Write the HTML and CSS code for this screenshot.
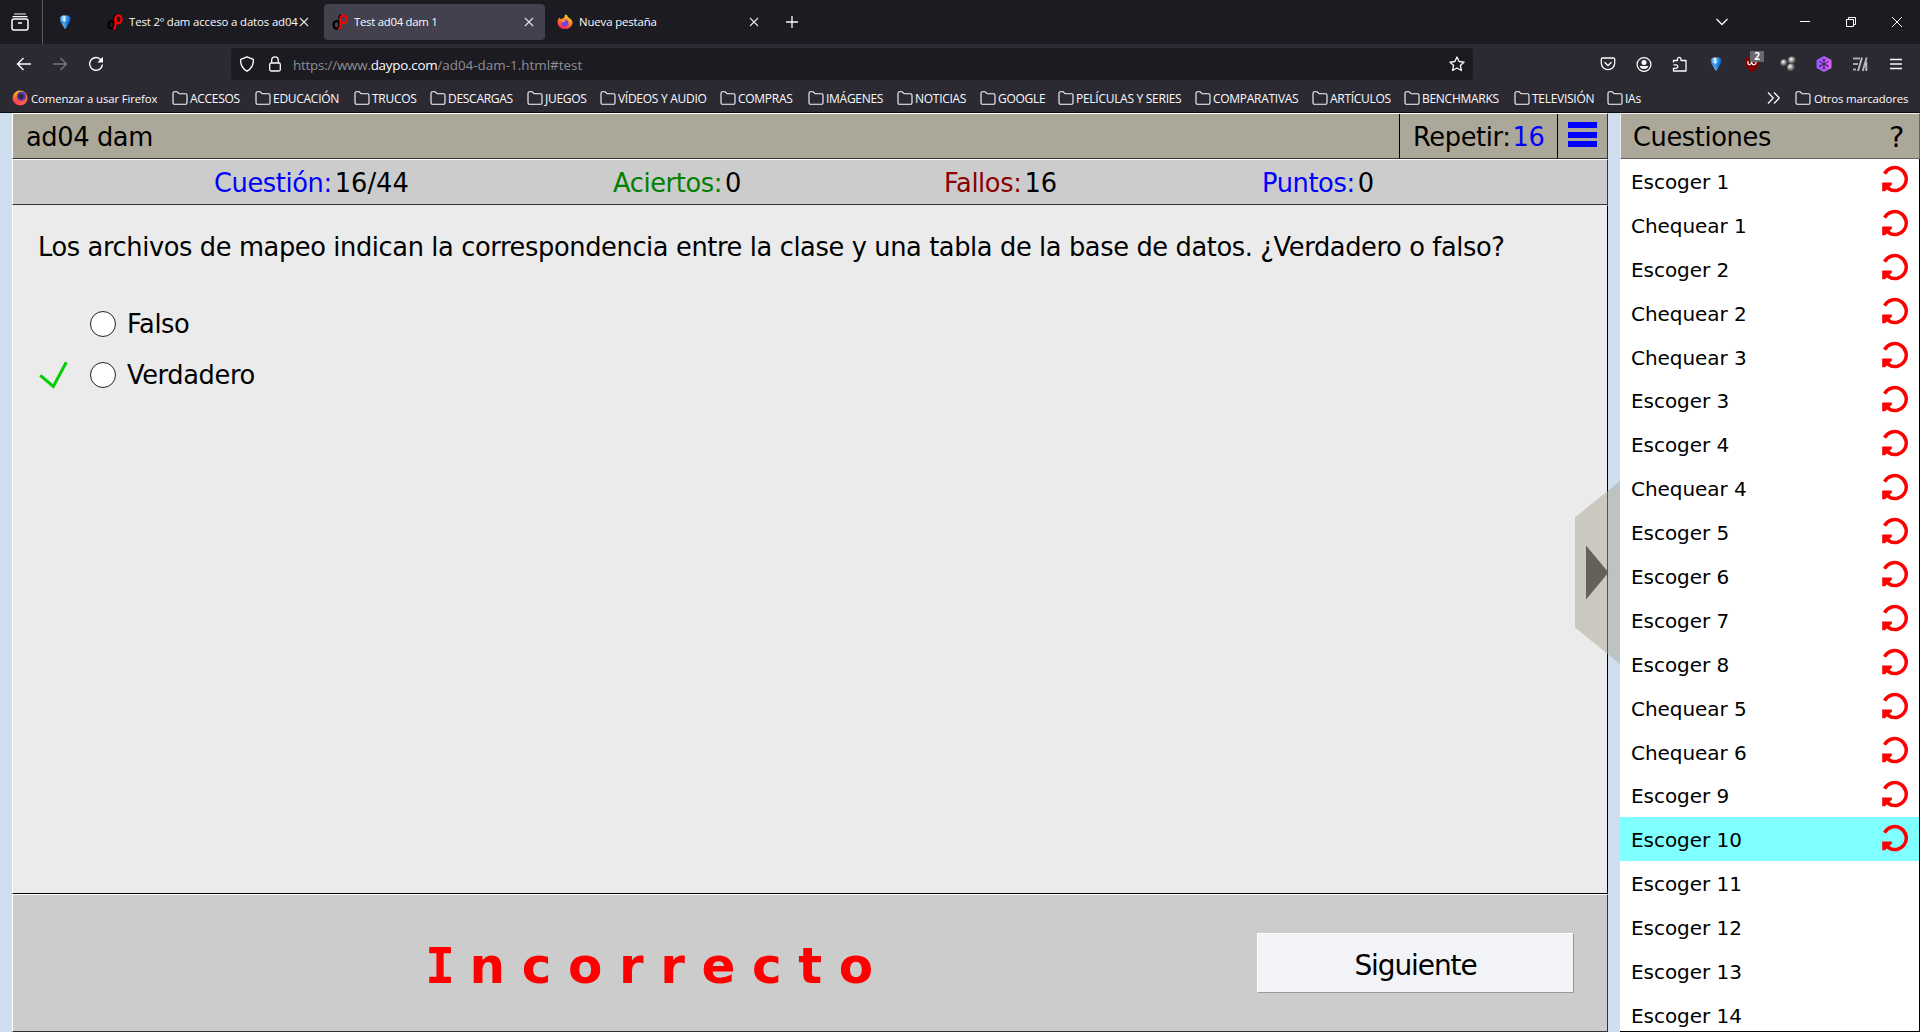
FILE: index.html
```html
<!DOCTYPE html>
<html lang="es">
<head>
<meta charset="utf-8">
<title>Test ad04 dam 1</title>
<link rel="stylesheet" href="styles.css">
</head>
<body>
<svg class="defs" width="0" height="0">
  <defs>
    <linearGradient id="fx" x1="0.7" y1="0" x2="0.3" y2="1"><stop offset="0" stop-color="#ffe226"/><stop offset="0.45" stop-color="#ff8a1f"/><stop offset="1" stop-color="#f5156c"/></linearGradient>
    <linearGradient id="gem" x1="0" y1="0" x2="1" y2="0"><stop offset="0" stop-color="#1176e0"/><stop offset="0.42" stop-color="#e8faff"/><stop offset="0.6" stop-color="#35a5f5"/><stop offset="1" stop-color="#0a4fb4"/></linearGradient>
    <linearGradient id="hex" x1="0" y1="0" x2="1" y2="0"><stop offset="0" stop-color="#9059ff"/><stop offset="1" stop-color="#e05cf5"/></linearGradient>
    <radialGradient id="ball" cx="0.4" cy="0.35" r="0.65"><stop offset="0" stop-color="#fff"/><stop offset="0.5" stop-color="#8a8a8a"/><stop offset="1" stop-color="#2c2c2c"/></radialGradient>
    <symbol id="folder" viewBox="0 0 16 16"><path d="M1 3.2A1.4 1.4 0 0 1 2.400 1.800H5.200L7.200 3.800H13.600A1.400 1.400 0 0 1 15 5.200V12.800A1.400 1.400 0 0 1 13.600 14.200H2.400A1.400 1.400 0 0 1 1 12.800Z" fill="none" stroke="#fbfbfe" stroke-width="1.1"/></symbol>
    <symbol id="close" viewBox="0 0 16 16"><path d="M4 4L12 12M12 4L4 12" stroke="#e6e6ea" stroke-width="1.1"/></symbol>
    <symbol id="daypo" viewBox="0 0 16 16"><ellipse cx="4.500" cy="10.800" rx="3" ry="3.800" fill="none" stroke="#000" stroke-width="2.200"/><path d="M8 15.800Q7.200 15 7.200 12V5Q7.200 2 8.800 .8" fill="none" stroke="#000" stroke-width="2"/><ellipse cx="11.400" cy="5.200" rx="3.100" ry="3.900" fill="none" stroke="#f00" stroke-width="2.200"/><path d="M8.500 4V11Q8.500 14 6.500 15.500" fill="none" stroke="#f00" stroke-width="2.200"/></symbol>
    <symbol id="firefox" viewBox="0 0 16 16"><path d="M8.600 .3Q10.500 1.500 11 3.300Q15.800 5.600 15.500 9.300A7.600 7 0 0 1 .5 9.200Q.3 5.500 2.500 3.500L3.200 5L5.500 4.500Q7 4.400 7.500 3Q7.600 1.500 8.600 .3Z" fill="url(#fx)"/><circle cx="8" cy="9" r="3.400" fill="#7540e8"/><path d="M4.500 6.500Q7 5 9 7Q6.500 7 6.800 8.600Q5 8.400 4.500 6.500Z" fill="#ff9a20"/></symbol>
    <symbol id="gemstone" viewBox="-1 -0.5 18 17.500"><path d="M2 3L5 1H12L14.500 3.500L13.500 7L8.800 15.500H7.600L2.800 7.500Z" fill="url(#gem)"/><path d="M3 6.500L7.500 8L13.500 6L8.500 15.500H7.800Z" fill="#0873d6" opacity=".65"/></symbol>
    <symbol id="redo" viewBox="0 0 28 28"><path d="M3.600 8.700A11.500 11.500 0 1 1 7 23.400" fill="none" stroke="#f00" stroke-width="3.500"/><path d="M1.200 17.600H10.800V20L8.500 21.500L11 24L9.500 26L6.500 24L4 26.300H1.200Z" fill="#f00"/></symbol>
  </defs>
</svg>

<header class="browser">
  <div class="tabstrip">
    <span class="recent"><svg viewBox="0 0 18 18" width="18" height="18"><path d="M3.500 1H14.500M2 3.700H16" stroke="#fbfbfe" stroke-width="1.200" stroke-linecap="round"/><rect x="1" y="6" width="16" height="11" rx="2" fill="none" stroke="#fbfbfe" stroke-width="1.500"/><path d="M7 10H11" stroke="#fbfbfe" stroke-width="1.500"/></svg></span>
    <span class="pinned"><svg width="16" height="16"><use href="#gemstone"/></svg></span>
    <div class="tab crowded"><svg width="16" height="20"><use href="#daypo"/></svg><span>Test 2º dam acceso a datos ad04</span><svg class="x" width="16" height="16"><use href="#close"/></svg></div>
    <div class="tab active"><svg width="16" height="20"><use href="#daypo"/></svg><span class="tight">Test ad04 dam 1</span><svg class="x" width="16" height="16"><use href="#close"/></svg></div>
    <div class="tab"><svg width="16" height="16"><use href="#firefox"/></svg><span>Nueva pestaña</span><svg class="x" width="16" height="16"><use href="#close"/></svg></div>
    <svg class="plus" width="16" height="16"><path d="M8 2V14M2 8H14" stroke="#fbfbfe" stroke-width="1.300"/></svg>
    <div class="window">
      <svg width="16" height="16" viewBox="0 0 16 16"><path d="M2.500 5L8 10.500L13.500 5" fill="none" stroke="#fbfbfe" stroke-width="1.300"/></svg>
      <svg width="12" height="12"><path d="M1 5.500H11" stroke="#fff"/></svg>
      <svg width="12" height="12"><path d="M1.500 3.500H8.500V10.500H1.500ZM3.500 3.500V1.500H10.500V8.500H8.500" fill="none" stroke="#fff"/></svg>
      <svg width="12" height="12"><path d="M1 1L11 11M11 1L1 11" stroke="#fff"/></svg>
    </div>
  </div>

  <div class="navbar">
    <div class="moves">
      <svg width="16" height="16"><path d="M1.500 8H15M7.500 2L1.500 8L7.500 14" fill="none" stroke="#fbfbfe" stroke-width="1.400"/></svg>
      <svg width="16" height="16"><path d="M1 8H14.500M8.500 2L14.500 8L8.500 14" fill="none" stroke="#76757c" stroke-width="1.300"/></svg>
      <svg width="16" height="16"><path d="M13 3.800A6.400 6.400 0 1 0 14.400 8.500" fill="none" stroke="#fbfbfe" stroke-width="1.400"/><path d="M15 .8V6.500H9.300Z" fill="#fbfbfe"/></svg>
    </div>
    <div class="urlbar">
      <svg width="16" height="16"><path d="M8 .8L14.300 3.300Q15 11 8 15.200Q1 11 1.700 3.300Z" fill="none" stroke="#fbfbfe" stroke-width="1.400" stroke-linejoin="round"/></svg>
      <svg width="16" height="16"><rect x="2.700" y="7" width="10.600" height="8" rx="1.500" fill="none" stroke="#fbfbfe" stroke-width="1.300"/><path d="M4.700 7V4.200A3.300 3.300 0 0 1 11.300 4.200V7" fill="none" stroke="#fbfbfe" stroke-width="1.300"/></svg>
      <p class="url"><span class="scheme">https://www.</span><span class="host">daypo.com</span><span class="path">/ad04-dam-1.html#test</span></p>
      <svg width="16" height="16"><path d="M8 1L10.100 5.500L15.100 6.100L11.400 9.500L12.400 14.500L8 12L3.600 14.500L4.600 9.500L.9 6.100L5.900 5.500Z" fill="none" stroke="#fbfbfe" stroke-width="1.300" stroke-linejoin="round"/></svg>
    </div>
    <div class="tools">
      <svg width="16" height="16"><path d="M2.500 2H13.500A1.200 1.200 0 0 1 14.700 3.200V7A6.700 6.700 0 0 1 1.300 7V3.200A1.200 1.200 0 0 1 2.500 2Z" fill="none" stroke="#fbfbfe" stroke-width="1.300"/><path d="M4.500 6.200L8 9.500L11.500 6.200" fill="none" stroke="#fbfbfe" stroke-width="1.300"/></svg>
      <svg width="16" height="16"><circle cx="8" cy="8.500" r="6.900" fill="none" stroke="#fbfbfe" stroke-width="1.300"/><circle cx="8" cy="6.500" r="2.500" fill="#fbfbfe"/><path d="M3.600 10H12.400Q11.500 13 8 13Q4.500 13 3.600 10Z" fill="#fbfbfe"/></svg>
      <svg width="16" height="16"><path d="M1.500 6.500V4.500H5.500V2.800A1.800 1.800 0 0 1 9 2.800V4.500H14V15H1.500V12.300H4A1.700 1.700 0 0 0 4 8.800H1.500" fill="none" stroke="#fbfbfe" stroke-width="1.300" stroke-linejoin="round"/></svg>
      <svg width="16" height="16"><use href="#gemstone"/></svg>
      <span class="ublock"><svg width="16" height="16"><path d="M8 0Q11 2 14.500 2V8Q14.500 13 8 16Q1.500 13 1.500 8V2Q5 2 8 0Z" fill="#800000"/><path d="M4 5V7.500Q4.500 9 6 8.500Q7.500 8 7.700 5.500Q8 9 10 8.700Q12 8.500 12 6.800Q11.500 5 10 5.500" fill="none" stroke="#fff" stroke-width="1.200"/></svg><b>2</b></span>
      <svg width="16" height="16"><circle cx="4" cy="7" r="3.700" fill="url(#ball)"/><circle cx="12" cy="4.500" r="4" fill="url(#ball)"/><circle cx="11" cy="11.700" r="4" fill="url(#ball)"/></svg>
      <svg width="16" height="16"><path d="M8 0L15.500 4V12L8 16L.5 12V4Z" fill="url(#hex)"/><path d="M8 2.500V13.500M3.500 5.500L12.500 10.500M12.500 5.500L3.500 10.500M4.800 8.800L4 11M11.300 8.800L12 11M6.500 3.500L8 5L9.500 3.500M6.500 12.500L8 11L9.500 12.500" fill="none" stroke="#31204f" stroke-width="1"/></svg>
      <svg width="16" height="16"><path d="M1 2.500H8M1 8H6M1 13.500H4" stroke="#a9a9ad" stroke-width="2.200"/><path d="M10 1.500L6 15M14.700 1.500L10.700 15M14.300 6V15" stroke="#b9b9bd" stroke-width="1.900"/></svg>
      <svg width="16" height="16"><path d="M2 3.500H14M2 8H14M2 12.500H14" stroke="#fbfbfe" stroke-width="1.300"/></svg>
    </div>
  </div>

  <div class="bookmarks">
    <a class="mixed"><svg width="16" height="16" viewBox="0 0 16 16"><circle cx="8" cy="8" r="7.500" fill="url(#fx)"/><circle cx="9.500" cy="6.200" r="4.800" fill="#6a35b8"/><circle cx="9" cy="6.500" r="2.700" fill="#2b2a45"/><path d="M2 9Q4.500 14 10 12Q14 10.500 14.500 6Q16 12 11.500 14.500Q5 17 2 9Z" fill="#ff5a50"/></svg><span>Comenzar a usar Firefox</span></a>
    <a><svg width="16" height="16"><use href="#folder"/></svg><span>ACCESOS</span></a>
    <a><svg width="16" height="16"><use href="#folder"/></svg><span>EDUCACIÓN</span></a>
    <a><svg width="16" height="16"><use href="#folder"/></svg><span>TRUCOS</span></a>
    <a><svg width="16" height="16"><use href="#folder"/></svg><span>DESCARGAS</span></a>
    <a><svg width="16" height="16"><use href="#folder"/></svg><span>JUEGOS</span></a>
    <a><svg width="16" height="16"><use href="#folder"/></svg><span>VÍDEOS Y AUDIO</span></a>
    <a><svg width="16" height="16"><use href="#folder"/></svg><span>COMPRAS</span></a>
    <a><svg width="16" height="16"><use href="#folder"/></svg><span>IMÁGENES</span></a>
    <a><svg width="16" height="16"><use href="#folder"/></svg><span>NOTICIAS</span></a>
    <a><svg width="16" height="16"><use href="#folder"/></svg><span>GOOGLE</span></a>
    <a><svg width="16" height="16"><use href="#folder"/></svg><span>PELÍCULAS Y SERIES</span></a>
    <a><svg width="16" height="16"><use href="#folder"/></svg><span>COMPARATIVAS</span></a>
    <a><svg width="16" height="16"><use href="#folder"/></svg><span>ARTÍCULOS</span></a>
    <a><svg width="16" height="16"><use href="#folder"/></svg><span>BENCHMARKS</span></a>
    <a><svg width="16" height="16"><use href="#folder"/></svg><span>TELEVISIÓN</span></a>
    <a><svg width="16" height="16"><use href="#folder"/></svg><span>IAs</span></a>
    <svg width="16" height="16"><path d="M2 2.500L7.300 8L2 13.500M8 2.500L13.300 8L8 13.500" fill="none" stroke="#fbfbfe" stroke-width="1.200"/></svg>
    <a class="mixed"><svg width="16" height="16"><use href="#folder"/></svg><span>Otros marcadores</span></a>
  </div>
</header>

<div class="page">
  <main class="quiz">
    <div class="panel titlebar">
      <h1>ad04 dam</h1>
      <div class="repeat">Repetir:<span>16</span></div>
      <div class="menu"><i></i><i></i><i></i></div>
    </div>
    <div class="panel stats">
      <div class="blue">Cuestión:<b>16/44</b></div>
      <div class="green">Aciertos:<b>0</b></div>
      <div class="red">Fallos:<b>16</b></div>
      <div class="blue">Puntos:<b>0</b></div>
    </div>
    <div class="panel question">
      <p>Los archivos de mapeo indican la correspondencia entre la clase y una tabla de la base de datos. ¿Verdadero o falso?</p>
      <div class="option"><span class="mark"></span><i class="radio"></i>Falso</div>
      <div class="option"><span class="mark"><svg width="30" height="30"><path d="M2.300 15.300L15.300 26.500L28.300 2.200" fill="none" stroke="#00d000" stroke-width="3"/></svg></span><i class="radio"></i>Verdadero</div>
    </div>
    <div class="panel result">
      <div class="verdict"><span class="slab">I</span>ncorrecto</div>
      <button class="next">Siguiente</button>
    </div>
  </main>

  <aside class="side">
    <div class="sidehead"><span>Cuestiones</span><span class="help">?</span></div>
    <ul>
      <li>Escoger 1<svg><use href="#redo"/></svg></li>
      <li>Chequear 1<svg><use href="#redo"/></svg></li>
      <li>Escoger 2<svg><use href="#redo"/></svg></li>
      <li>Chequear 2<svg><use href="#redo"/></svg></li>
      <li>Chequear 3<svg><use href="#redo"/></svg></li>
      <li>Escoger 3<svg><use href="#redo"/></svg></li>
      <li>Escoger 4<svg><use href="#redo"/></svg></li>
      <li>Chequear 4<svg><use href="#redo"/></svg></li>
      <li>Escoger 5<svg><use href="#redo"/></svg></li>
      <li>Escoger 6<svg><use href="#redo"/></svg></li>
      <li>Escoger 7<svg><use href="#redo"/></svg></li>
      <li>Escoger 8<svg><use href="#redo"/></svg></li>
      <li>Chequear 5<svg><use href="#redo"/></svg></li>
      <li>Chequear 6<svg><use href="#redo"/></svg></li>
      <li>Escoger 9<svg><use href="#redo"/></svg></li>
      <li class="current">Escoger 10<svg><use href="#redo"/></svg></li>
      <li>Escoger 11</li>
      <li>Escoger 12</li>
      <li>Escoger 13</li>
      <li>Escoger 14</li>
    </ul>
    <svg class="handle" width="45" height="183"><path d="M45 0V183L0 146.500V36.500Z" fill="#aba695" opacity=".5"/><path d="M11 64.500L33.500 91.500L11 118.500Z" fill="#62615c"/></svg>
  </aside>
</div>
</body>
</html>
```
FILE: styles.css
```css
* { box-sizing: border-box; }
body {
  margin: 0;
  height: 1032px;
  overflow: hidden;
  display: flex;
  flex-direction: column;
  background: #cfdeee;
  color: #000;
  font: 25.7px/30px Verdana, "DejaVu Sans", sans-serif;
  letter-spacing: -0.39px;
}
svg { display: block; flex: none; }
.defs { position: absolute; }

/* Browser chrome */
.browser {
  flex: none;
  height: 113px;
  background: #2b2a33;
  border-bottom: 1px solid #0c0c0f;
  color: #fbfbfe;
  font: 12px/16px "Open Sans", sans-serif;
}
.tabstrip {
  height: 44px;
  display: flex;
  align-items: center;
  background: #1c1b22;
}
.recent {
  width: 43px;
  height: 44px;
  padding: 13px 0 0 11px;
  border-right: 1px solid #5b5a62;
}
.pinned { width: 56px; padding-left: 14px; }
.tab {
  width: 221px;
  height: 36px;
  margin-right: 4px;
  padding: 0 8px;
  display: flex;
  align-items: center;
  gap: 6px;
  border-radius: 4px;
  font-size: 11.4px;
  letter-spacing: -0.13px;
  white-space: nowrap;
}
.tab .tight { letter-spacing: -0.28px; }
.tab.active { background: #42414d; }
.tab .x { margin-left: auto; }
.tab.crowded .x { margin-left: -8px; }
.plus { margin-left: 10px; }
.window {
  margin-left: auto;
  padding-right: 17px;
  display: flex;
  align-items: center;
  gap: 34px;
}
.window svg:first-child { margin-right: 35px; }

.navbar {
  height: 40px;
  padding: 4px 16px;
  display: flex;
  align-items: center;
}
.moves { width: 215px; display: flex; gap: 20px; }
.urlbar {
  width: 1242px;
  height: 32px;
  padding: 0 8px;
  display: flex;
  align-items: center;
  gap: 12px;
  border-radius: 4px;
  background: #1c1b22;
}
.url { flex: 1; margin: 1px 0 0 -2px; font-size: 13.4px; color: #8f8f95; }
.scheme { letter-spacing: -0.22px; }
.host { color: #fbfbfe; letter-spacing: -0.26px; }
.path { letter-spacing: 0.02px; }
.tools { margin-left: auto; display: flex; gap: 20px; }
.ublock { position: relative; }
.ublock b {
  position: absolute;
  left: 6px;
  top: -13px;
  width: 14px;
  height: 11px;
  background: #68676c;
  font-size: 10px;
  line-height: 11px;
  text-align: center;
}
.tools .ublock b { top: -5px; }

.bookmarks {
  height: 28px;
  padding-left: 12px;
  display: grid;
  grid-template-columns: 160px 83px 99px 76px 97px 73px 120px 88px 89px 83px 78px 137px 117px 92px 110px 93px 159px 29px auto;
  align-items: center;
  letter-spacing: -0.28px;
  white-space: nowrap;
}
.bookmarks a { display: flex; align-items: center; gap: 2px; }
.bookmarks span { padding-top: 1px; }
.bookmarks .mixed { gap: 3px; font-size: 11.4px; letter-spacing: -0.13px; }

/* Quiz */
.page {
  height: 919px;
  padding-left: 12px;
  display: flex;
  gap: 12px;
}
.quiz { width: 1596px; display: flex; flex-direction: column; }
.panel {
  border: 1px solid #333;
  border-top-color: #fff;
  border-left-color: #fff;
}
.titlebar { height: 46px; display: flex; background: #aca899; }
h1 { flex: 1; margin: 0; padding: 8px 0 0 13px; font: inherit; }
.repeat { width: 158px; padding: 8px 0 0 13px; border-left: 1px solid #000; }
.repeat span { margin-left: 2px; color: #00f; }
.menu {
  width: 50px;
  padding: 8px 10px;
  display: grid;
  grid-auto-rows: 6px;
  gap: 3.5px;
  border-left: 1px solid #000;
}
.menu i { background: #00f; }
.stats {
  height: 46px;
  padding: 8px 0 0 201px;
  display: grid;
  grid-template-columns: 399px 331px 318px auto;
  background: #ccc;
}
.stats b { margin-left: 3px; font-weight: normal; letter-spacing: 0; color: #000; }
.blue { color: #00f; }
.green { color: #008000; }
.red { color: #8b0000; }
.question { flex: 1; padding: 26px 0 0 25px; background: #ebebeb; border-color: #ebebeb #000 #000 #fff; }
.question p { margin: 0 0 36px; white-space: nowrap; }
.option { height: 51.5px; display: flex; align-items: center; }
.mark { width: 52px; }
.radio {
  width: 26px;
  height: 26px;
  margin-right: 11px;
  border: 1px solid #222;
  border-radius: 50%;
  background: #fff;
}
.result {
  height: 138px;
  padding: 38px 33px 0 412px;
  display: flex;
  justify-content: space-between;
  background: #ccc;
}
.verdict {
  padding-top: 3px;
  color: #f00;
  font-size: 50px;
  font-weight: bold;
  line-height: 60px;
  letter-spacing: 16.6px;
}
.slab { font-family: "DejaVu Sans Mono", monospace; letter-spacing: 14.5px; }
.next {
  width: 317px;
  height: 60px;
  padding: 5px 0 0;
  border: 1px solid #999;
  border-top-color: #fff;
  border-left-color: #fff;
  background: #f1f3f7;
  color: #000;
  font: 28px/34px Tahoma, Verdana, "DejaVu Sans", sans-serif;
  letter-spacing: -1.1px;
}

/* Question list */
.side { position: relative; width: 300px; }
.sidehead {
  height: 46px;
  padding: 8px 15px 0 12px;
  display: flex;
  justify-content: space-between;
  background: #aca899;
  border: 1px solid #666;
  border-top-color: #eee;
  border-left-color: #eee;
}
.help { font-size: 29px; }
.side ul {
  height: 873px;
  margin: 0;
  padding: 0;
  list-style: none;
  background: #fff;
  border: solid #000;
  border-width: 0 1px 1px 0;
  font-size: 20px;
  letter-spacing: -0.05px;
}
.side li {
  height: 43.9px;
  padding: 2px 10px 0 11px;
  display: flex;
  align-items: center;
  justify-content: space-between;
}
.side li svg { width: 28px; height: 28px; margin-top: -5px; }
.side .current { background: #80ffff; }
.handle { position: absolute; left: -45px; top: 368px; }
```
